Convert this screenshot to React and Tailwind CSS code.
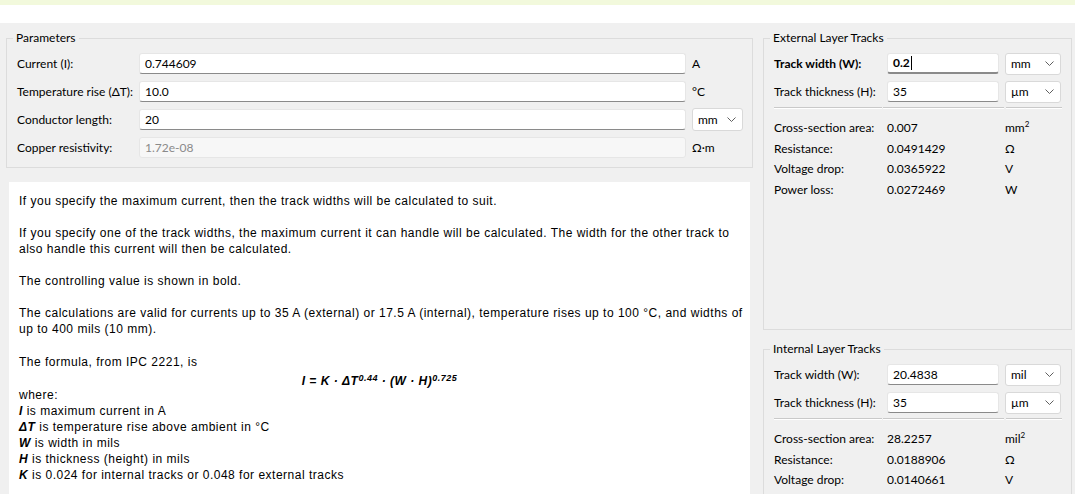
import React from "react";
import clsx from "clsx";

const ui = "font-[family-name:'Lato','Noto_Sans',sans-serif] text-[12px] text-black";
const arial = "font-[family-name:'Liberation_Sans',Arial,sans-serif] tracking-[0.5px]";

function Chevron() {
  return (
    <svg width="9" height="5" viewBox="0 0 9 5" className="shrink-0">
      <path d="M0.5 0.5 L4.5 4.5 L8.5 0.5" fill="none" stroke="#5f5f5f" strokeWidth="1" />
    </svg>
  );
}

function Select({ value, className }) {
  return (
    <div
      className={clsx(
        "h-[22px] flex items-center justify-between pl-[5px] pr-[6px] bg-white border border-[#d9d9d9] rounded-[3px]",
        className
      )}
    >
      <span>{value}</span>
      <Chevron />
    </div>
  );
}

function Field({ value, focus, disabled, className }) {
  return (
    <div
      className={clsx(
        "h-[21px] flex items-center px-[5px] rounded-[3px] border border-[#e6e6e6]",
        disabled ? "bg-[#f7f7f7] text-[#8a8a8a]" : "bg-white border-b-[#8a8a8a]",
        focus && "border-b-2 border-b-[#005fb8] font-bold",
        className
      )}
    >
      {value}
      {focus && <span className="w-px h-[14px] bg-black ml-px" />}
    </div>
  );
}

function Group({ title, className, children }) {
  return (
    <fieldset className={clsx("border border-[#dcdcdc] shrink-0", className)}>
      <legend className="ml-[6px] px-[3px] leading-[16px]">{title}</legend>
      {children}
    </fieldset>
  );
}

function ParamRow({ label, value, unit, select, disabled }) {
  return (
    <div className="flex items-center h-[21px]">
      <div className="w-[122px]">{label}</div>
      <Field value={value} disabled={disabled} className="w-[547px]" />
      <div className="ml-[6px] w-[51px]">
        {select ? <Select value={unit} className="h-[23px]" /> : <span>{unit}</span>}
      </div>
    </div>
  );
}

function Sq({ children }) {
  return (
    <span>
      {children}
      <span className="text-[8px] align-[5px] leading-none">2</span>
    </span>
  );
}

function TrackGroup({ title, width, widthUnit, focus, results, className }) {
  return (
    <Group title={title} className={className}>
      <div className="pl-[10px] pr-[9px] pt-[7px]">
        <div className="flex flex-col gap-[7px]">
          <div className="flex items-center h-[21px]">
            <div className={clsx("w-[113px]", focus && "font-bold")}>Track width (W):</div>
            <Field value={width} focus={focus} className="w-[112px]" />
            <Select value={widthUnit} className="ml-[6px] w-[56px]" />
          </div>
          <div className="flex items-center h-[21px]">
            <div className="w-[113px]">Track thickness (H):</div>
            <Field value="35" className="w-[112px]" />
            <Select value="µm" className="ml-[6px] w-[56px]" />
          </div>
        </div>
        <div className="flex mt-[5px] h-[2px]">
          <div className="w-[108px] border-t border-t-[#c9c9c9] border-b border-b-white" />
          <div className="ml-[1px] w-[121px] border-t border-t-[#c9c9c9] border-b border-b-white" />
          <div className="ml-[2px] w-[56px] border-t border-t-[#c9c9c9] border-b border-b-white" />
        </div>
        <div className="mt-[9px]">
          {results.map(([l, v, u]) => (
            <div key={l} className="flex items-center h-[20.6px]">
              <div className="w-[113px]">{l}</div>
              <div className="w-[118px]">{v}</div>
              <div>{u}</div>
            </div>
          ))}
        </div>
      </div>
    </Group>
  );
}

export default function App() {
  const B = ({ children }) => <b className="italic">{children}</b>;
  return (
    <div className={clsx("w-[1075px] h-[494px] overflow-hidden flex flex-col bg-[#f0f0f0]", ui)}>
      <div className="h-[5px] shrink-0 bg-[#f2f9dc]" />
      <div className="h-[18px] shrink-0 bg-white" />
      <div className="flex flex-1 min-h-0 pl-[6px]">
        <div className="flex flex-col w-[747px]">
          <Group title="Parameters" className="mt-[7px]">
            <div className="pl-[10px] pr-[8px] pt-[7px] pb-[9px] flex flex-col gap-[7px]">
              <ParamRow label="Current (I):" value="0.744609" unit="A" />
              <ParamRow label="Temperature rise (ΔT):" value="10.0" unit="°C" />
              <ParamRow label="Conductor length:" value="20" unit="mm" select />
              <ParamRow label="Copper resistivity:" value="1.72e-08" unit="Ω·m" disabled />
            </div>
          </Group>
          <div className={clsx("mt-[14px] ml-[3px] w-[741px] flex-1 bg-white pt-[11px] pl-[10px] text-[12px] leading-4 text-black", arial)}>
            <p>If you specify the maximum current, then the track widths will be calculated to suit.</p>
            <p className="mt-4">
              If you specify one of the track widths, the maximum current it can handle will be calculated. The width for the other track to
              <br />
              also handle this current will then be calculated.
            </p>
            <p className="mt-4">The controlling value is shown in bold.</p>
            <p className="mt-4">
              The calculations are valid for currents up to 35 A (external) or 17.5 A (internal), temperature rises up to 100 °C, and widths of
              <br />
              up to 400 mils (10 mm).
            </p>
            <p className="mt-[17px]">The formula, from IPC 2221, is</p>
            <div className="h-[16px] pt-[3px] text-center pr-[10px] font-bold italic">
              I = K · ΔT<sup>0.44</sup> · (W · H)<sup>0.725</sup>
            </div>
            <p className="mt-px">where:</p>
            <p><B>I</B> is maximum current in A</p>
            <p><B>ΔT</B> is temperature rise above ambient in °C</p>
            <p><B>W</B> is width in mils</p>
            <p><B>H</B> is thickness (height) in mils</p>
            <p><B>K</B> is 0.024 for internal tracks or 0.048 for external tracks</p>
          </div>
        </div>
        <div className="ml-[10px] w-[309px] flex flex-col">
          <TrackGroup
            title="External Layer Tracks"
            width="0.2"
            widthUnit="mm"
            focus
            className="mt-[7px] h-[300px]"
            results={[
              ["Cross-section area:", "0.007", <Sq>mm</Sq>],
              ["Resistance:", "0.0491429", "Ω"],
              ["Voltage drop:", "0.0365922", "V"],
              ["Power loss:", "0.0272469", "W"],
            ]}
          />
          <TrackGroup
            title="Internal Layer Tracks"
            width="20.4838"
            widthUnit="mil"
            className="mt-[11px] h-[200px]"
            results={[
              ["Cross-section area:", "28.2257", <Sq>mil</Sq>],
              ["Resistance:", "0.0188906", "Ω"],
              ["Voltage drop:", "0.0140661", "V"],
            ]}
          />
        </div>
      </div>
    </div>
  );
}
